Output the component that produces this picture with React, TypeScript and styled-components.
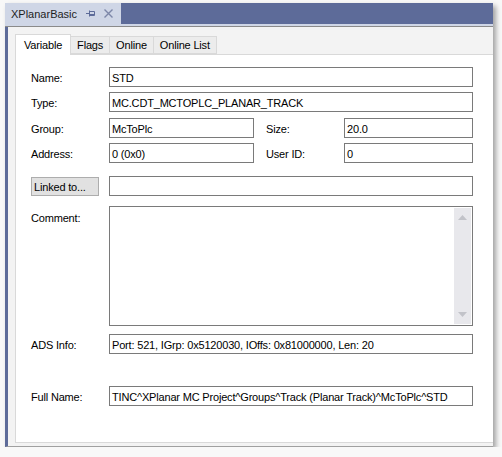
import React from 'react';
import styled, { createGlobalStyle } from 'styled-components';

const GlobalStyle = createGlobalStyle`
  body {
    margin: 0;
    background: #f8f8f8;
    font-family: "Liberation Sans", Arial, sans-serif;
    font-size: 11px;
    letter-spacing: -0.18px;
    color: #000;
  }
`;

const Window = styled.div`
  margin: 3px 0 0 5px;
  width: 488px;
  height: 444px;
  display: flex;
  flex-direction: column;
  box-shadow: 3px 3px 5px rgba(0, 0, 0, 0.35);
  background: #f0f0f0;
`;

const TitleBar = styled.div`
  height: 21px;
  display: flex;
  background: #5d6b99;
`;

const DocTab = styled.div`
  width: 116px;
  display: flex;
  align-items: center;
  padding-left: 6px;
  box-sizing: border-box;
  background: #cfd6e6;
  color: #1e1e1e;
  font-size: 11px;
  letter-spacing: 0;
`;

const TabTitle = styled.span`
  margin-right: 9px;
`;

const TabIcon = styled.svg`
  margin-right: 8px;
`;

const TitleStrip = styled.div`
  height: 2px;
  background: #cfd6e6;
  border-bottom: 1px solid #8a8a8a;
`;

const Body = styled.div`
  flex: 1;
  display: flex;
  flex-direction: column;
  border-left: 3px solid #5d6b99;
  border-bottom: 1px solid #a0a0a0;
  padding: 7px 0 3px 7px;
  background: #f3f3f3;
`;

const TabStrip = styled.div`
  display: flex;
  align-items: flex-end;
  height: 21px;
  margin-bottom: -1px;
  position: relative;
  z-index: 1;
`;

const Tab = styled.div<{ active?: boolean }>`
  box-sizing: border-box;
  height: ${p => (p.active ? 21 : 18)}px;
  padding: 0 ${p => (p.active ? 8 : 6)}px;
  margin-bottom: ${p => (p.active ? 0 : 1)}px;
  display: flex;
  align-items: center;
  background: ${p => (p.active ? '#fff' : '#ececec')};
  border: 1px solid #d9d9d9;
  border-bottom: ${p => (p.active ? 'none' : '1px solid #d9d9d9')};
  margin-left: ${p => (p.active ? 0 : -1)}px;
  color: #000;
`;

const Page = styled.div`
  flex: 1;
  background: #fff;
  border: 1px solid #d9d9d9;
  border-right: none;
  padding: 12px 20px 0 15px;
  display: flex;
  flex-direction: column;
`;

const Row = styled.div<{ top: number }>`
  display: flex;
  align-items: center;
  margin-top: ${p => p.top}px;
`;

const Label = styled.div<{ width?: number; indent?: number }>`
  width: ${p => p.width ?? 78}px;
  padding-left: ${p => p.indent ?? 0}px;
  padding-top: 2px;
  box-sizing: border-box;
  flex-shrink: 0;
`;

const TopLabel = styled(Label)`
  align-self: flex-start;
  padding-top: 6px;
`;

const Field = styled.div<{ width?: number }>`
  box-sizing: border-box;
  height: 20px;
  ${p => (p.width ? `width: ${p.width}px;` : 'flex: 1;')}
  border: 1px solid #7a7a7a;
  padding: 1px 0 0 2px;
  display: flex;
  align-items: center;
  white-space: nowrap;
  overflow: hidden;
`;

const Button = styled.div`
  box-sizing: border-box;
  width: 68px;
  height: 19px;
  margin-right: 10px;
  background: #e1e1e1;
  border: 1px solid #adadad;
  padding: 1px 0 0 2px;
  display: flex;
  align-items: center;
`;

const TextArea = styled.div`
  flex: 1;
  height: 120px;
  box-sizing: border-box;
  border: 1px solid #7a7a7a;
  display: flex;
  justify-content: flex-end;
  padding: 1px;
`;

const ScrollBar = styled.div`
  width: 17px;
  background: #e8e8ec;
  display: flex;
  flex-direction: column;
  justify-content: space-between;
  align-items: center;
  padding: 7px 0;
`;

const Arrow = ({ down }: { down?: boolean }) => (
  <svg width="9" height="5" viewBox="0 0 9 5">
    <polygon points={down ? '0,0 9,0 4.5,5' : '0,5 9,5 4.5,0'} fill="#c2c3c9" />
  </svg>
);

const tabs = ['Variable', 'Flags', 'Online', 'Online List'];

export default function App() {
  return (
    <>
      <GlobalStyle />
      <Window>
        <TitleBar>
          <DocTab>
            <TabTitle>XPlanarBasic</TabTitle>
            <TabIcon width="10" height="9" viewBox="0 0 10 9">
              <path d="M0 4.5h3M3.5 1.5v6M3.5 2.5h5v4h-5M3.5 5.5h5" stroke="#5d6b99" strokeWidth="1" fill="none" />
            </TabIcon>
            <svg width="9" height="9" viewBox="0 0 9 9">
              <path d="M0.5 0.5l8 8M8.5 0.5l-8 8" stroke="#7d87a8" strokeWidth="1.4" />
            </svg>
          </DocTab>
        </TitleBar>
        <TitleStrip />
        <Body>
          <TabStrip>
            {tabs.map((t, i) => (
              <Tab key={t} active={i === 0}>
                {t}
              </Tab>
            ))}
          </TabStrip>
          <Page>
            <Row top={0}>
              <Label>Name:</Label>
              <Field>STD</Field>
            </Row>
            <Row top={5}>
              <Label>Type:</Label>
              <Field>MC.CDT_MCTOPLC_PLANAR_TRACK</Field>
            </Row>
            <Row top={6}>
              <Label>Group:</Label>
              <Field width={145}>McToPlc</Field>
              <Label width={90} indent={12}>Size:</Label>
              <Field>20.0</Field>
            </Row>
            <Row top={5}>
              <Label>Address:</Label>
              <Field width={145}>0 (0x0)</Field>
              <Label width={90} indent={12}>User ID:</Label>
              <Field>0</Field>
            </Row>
            <Row top={13}>
              <Button>Linked to...</Button>
              <Field />
            </Row>
            <Row top={10}>
              <TopLabel>Comment:</TopLabel>
              <TextArea>
                <ScrollBar>
                  <Arrow />
                  <Arrow down />
                </ScrollBar>
              </TextArea>
            </Row>
            <Row top={8}>
              <Label>ADS Info:</Label>
              <Field>Port: 521, IGrp: 0x5120030, IOffs: 0x81000000, Len: 20</Field>
            </Row>
            <Row top={32}>
              <Label>Full Name:</Label>
              <Field>TINC^XPlanar MC Project^Groups^Track (Planar Track)^McToPlc^STD</Field>
            </Row>
          </Page>
        </Body>
      </Window>
    </>
  );
}
